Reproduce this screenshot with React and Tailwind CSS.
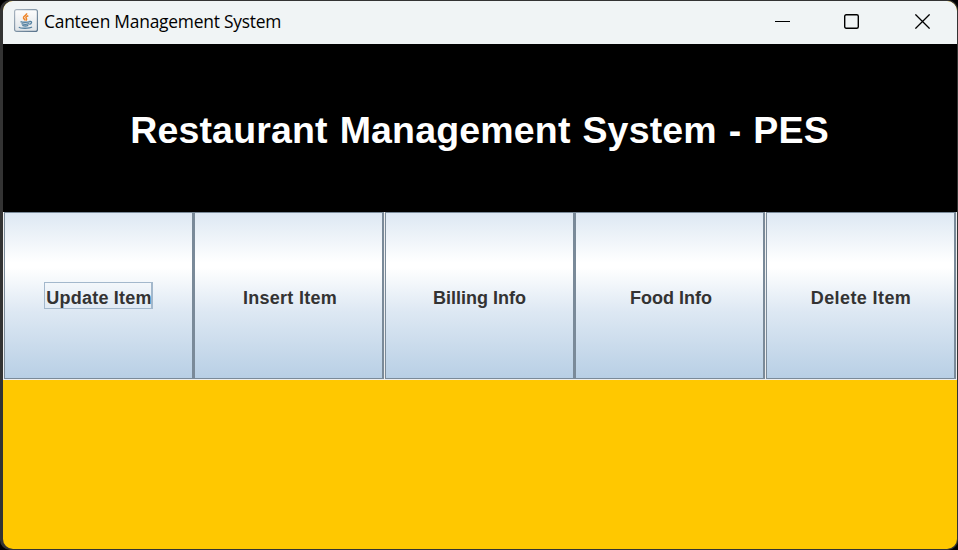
const BUTTONS = [
  { label: "Update Item", focused: true, spacing: "tracking-[0.22px] pl-[2px]" },
  { label: "Insert Item", spacing: "tracking-[0.28px] pl-[3px]" },
  { label: "Billing Info", gap: true, spacing: "tracking-[0.02px]" },
  { label: "Food Info", spacing: "tracking-[0.02px] pl-[3px]" },
  { label: "Delete Item", gap: true, spacing: "tracking-[0.4px] pl-px" },
];

function JavaIcon() {
  return (
    <svg width="24" height="24" viewBox="0 0 24 24" fill="none" className="shrink-0">
      <defs>
        <linearGradient id="face" x1="0" y1="0" x2="0" y2="1">
          <stop offset="0" stopColor="#fdfdfd" />
          <stop offset="1" stopColor="#dfe4e8" />
        </linearGradient>
        <linearGradient id="edge" x1="0" y1="0" x2="1" y2="1">
          <stop offset="0" stopColor="#a9b5c0" />
          <stop offset="1" stopColor="#58738c" />
        </linearGradient>
      </defs>
      <rect x="0.6" y="0.6" width="22.8" height="21.8" rx="2" fill="url(#face)" stroke="url(#edge)" strokeWidth="1.2" />
      <path d="M12.600 4.200c.8 2-3.600 2.600-3.100 4.600.2 1 1.300 1.500 1.500 2.700M14.300 6.800c-2.400 1-2.900 1.700-2 2.700.6.8.2 1.500-.5 2" stroke="#ee8428" strokeWidth="1.500" />
      <path d="M6.500 12.600c1.500.8 7.500.8 9.500 0M7.500 14.600c2 .8 5.500.8 7.500 0M8.300 16.400c2 .7 4.300.7 6 0M15.500 12.500c3-.8 2.500 2.500-.2 2.800M5 18c1 1.700 10.500 1.700 13 0" stroke="#5480a0" strokeWidth="1.400" />
    </svg>
  );
}

function TitleBar() {
  return (
    <header className="flex h-[43px] shrink-0 items-start bg-[#f0f4f5] text-black">
      <div className="flex pt-2 pl-[11px]">
        <JavaIcon />
        <span className="-mt-px ml-[6px] block w-[240px] whitespace-nowrap font-['Open_Sans','Noto_Sans',sans-serif] text-[17.400px] leading-[26px] tracking-[-0.230px]">
          Canteen Management System
        </span>
      </div>
      <div className="ml-auto flex pt-[13px] pr-[27px]">
        <svg width="15" height="15" viewBox="0 0 15 15" className="mr-[54px]">
          <path d="M0 7.500h15" stroke="black" />
        </svg>
        <svg width="15" height="15" viewBox="0 0 15 15" className="mr-[56px]">
          <rect x="0.700" y="0.700" width="13.600" height="13.600" rx="1.500" fill="none" stroke="black" strokeWidth="1.400" />
        </svg>
        <svg width="15" height="15" viewBox="0 0 15 15">
          <path d="M.4.400l14.200 14.200M14.600.400L.4 14.600" stroke="black" strokeWidth="1.300" />
        </svg>
      </div>
    </header>
  );
}

function MenuButton({ label, focused, gap, spacing }) {
  return (
    <button
      className={`flex h-[167px] w-[190px] shrink-0 items-center justify-center border border-r-2 border-[#7a8a99] bg-[linear-gradient(to_bottom,#dde8f3_0%,#ffffff_30%,#ffffff_33%,#dde8f3_60%,#b8cfe5_100%)] font-['Liberation_Sans',Arial,sans-serif] text-[18px] font-bold text-[#333333] ${gap ? "ml-px" : ""}`}
    >
      <span
        className={`flex h-[27px] items-center whitespace-nowrap border pt-[5px] ${spacing} ${focused ? "w-[109px] justify-center border-r-2 border-[#a3b8cc]" : "border-transparent"}`}
      >
        {label}
      </span>
    </button>
  );
}

export default function App() {
  return (
    <div className="h-[550px] w-[958px] overflow-hidden bg-black">
      <div className="h-[550px] w-[958px] rounded-[10px] bg-[#333333] pt-px pl-[3px]">
        <main className="flex h-[548px] w-[954px] flex-col overflow-hidden rounded-[10px] bg-[#ffc800]">
          <TitleBar />
          <section className="flex h-[168px] shrink-0 items-center justify-center bg-black pt-1 pr-px">
            <h1 className="whitespace-nowrap font-['Liberation_Sans',Arial,sans-serif] text-[37.500px] font-bold tracking-[0.170px] text-white [word-spacing:1.300px]">
              Restaurant Management System - PES
            </h1>
          </section>
          <nav className="flex h-[168px] shrink-0 bg-[#eeeeee] pl-px">
            {BUTTONS.map((b) => (
              <MenuButton key={b.label} {...b} />
            ))}
          </nav>
        </main>
      </div>
    </div>
  );
}
